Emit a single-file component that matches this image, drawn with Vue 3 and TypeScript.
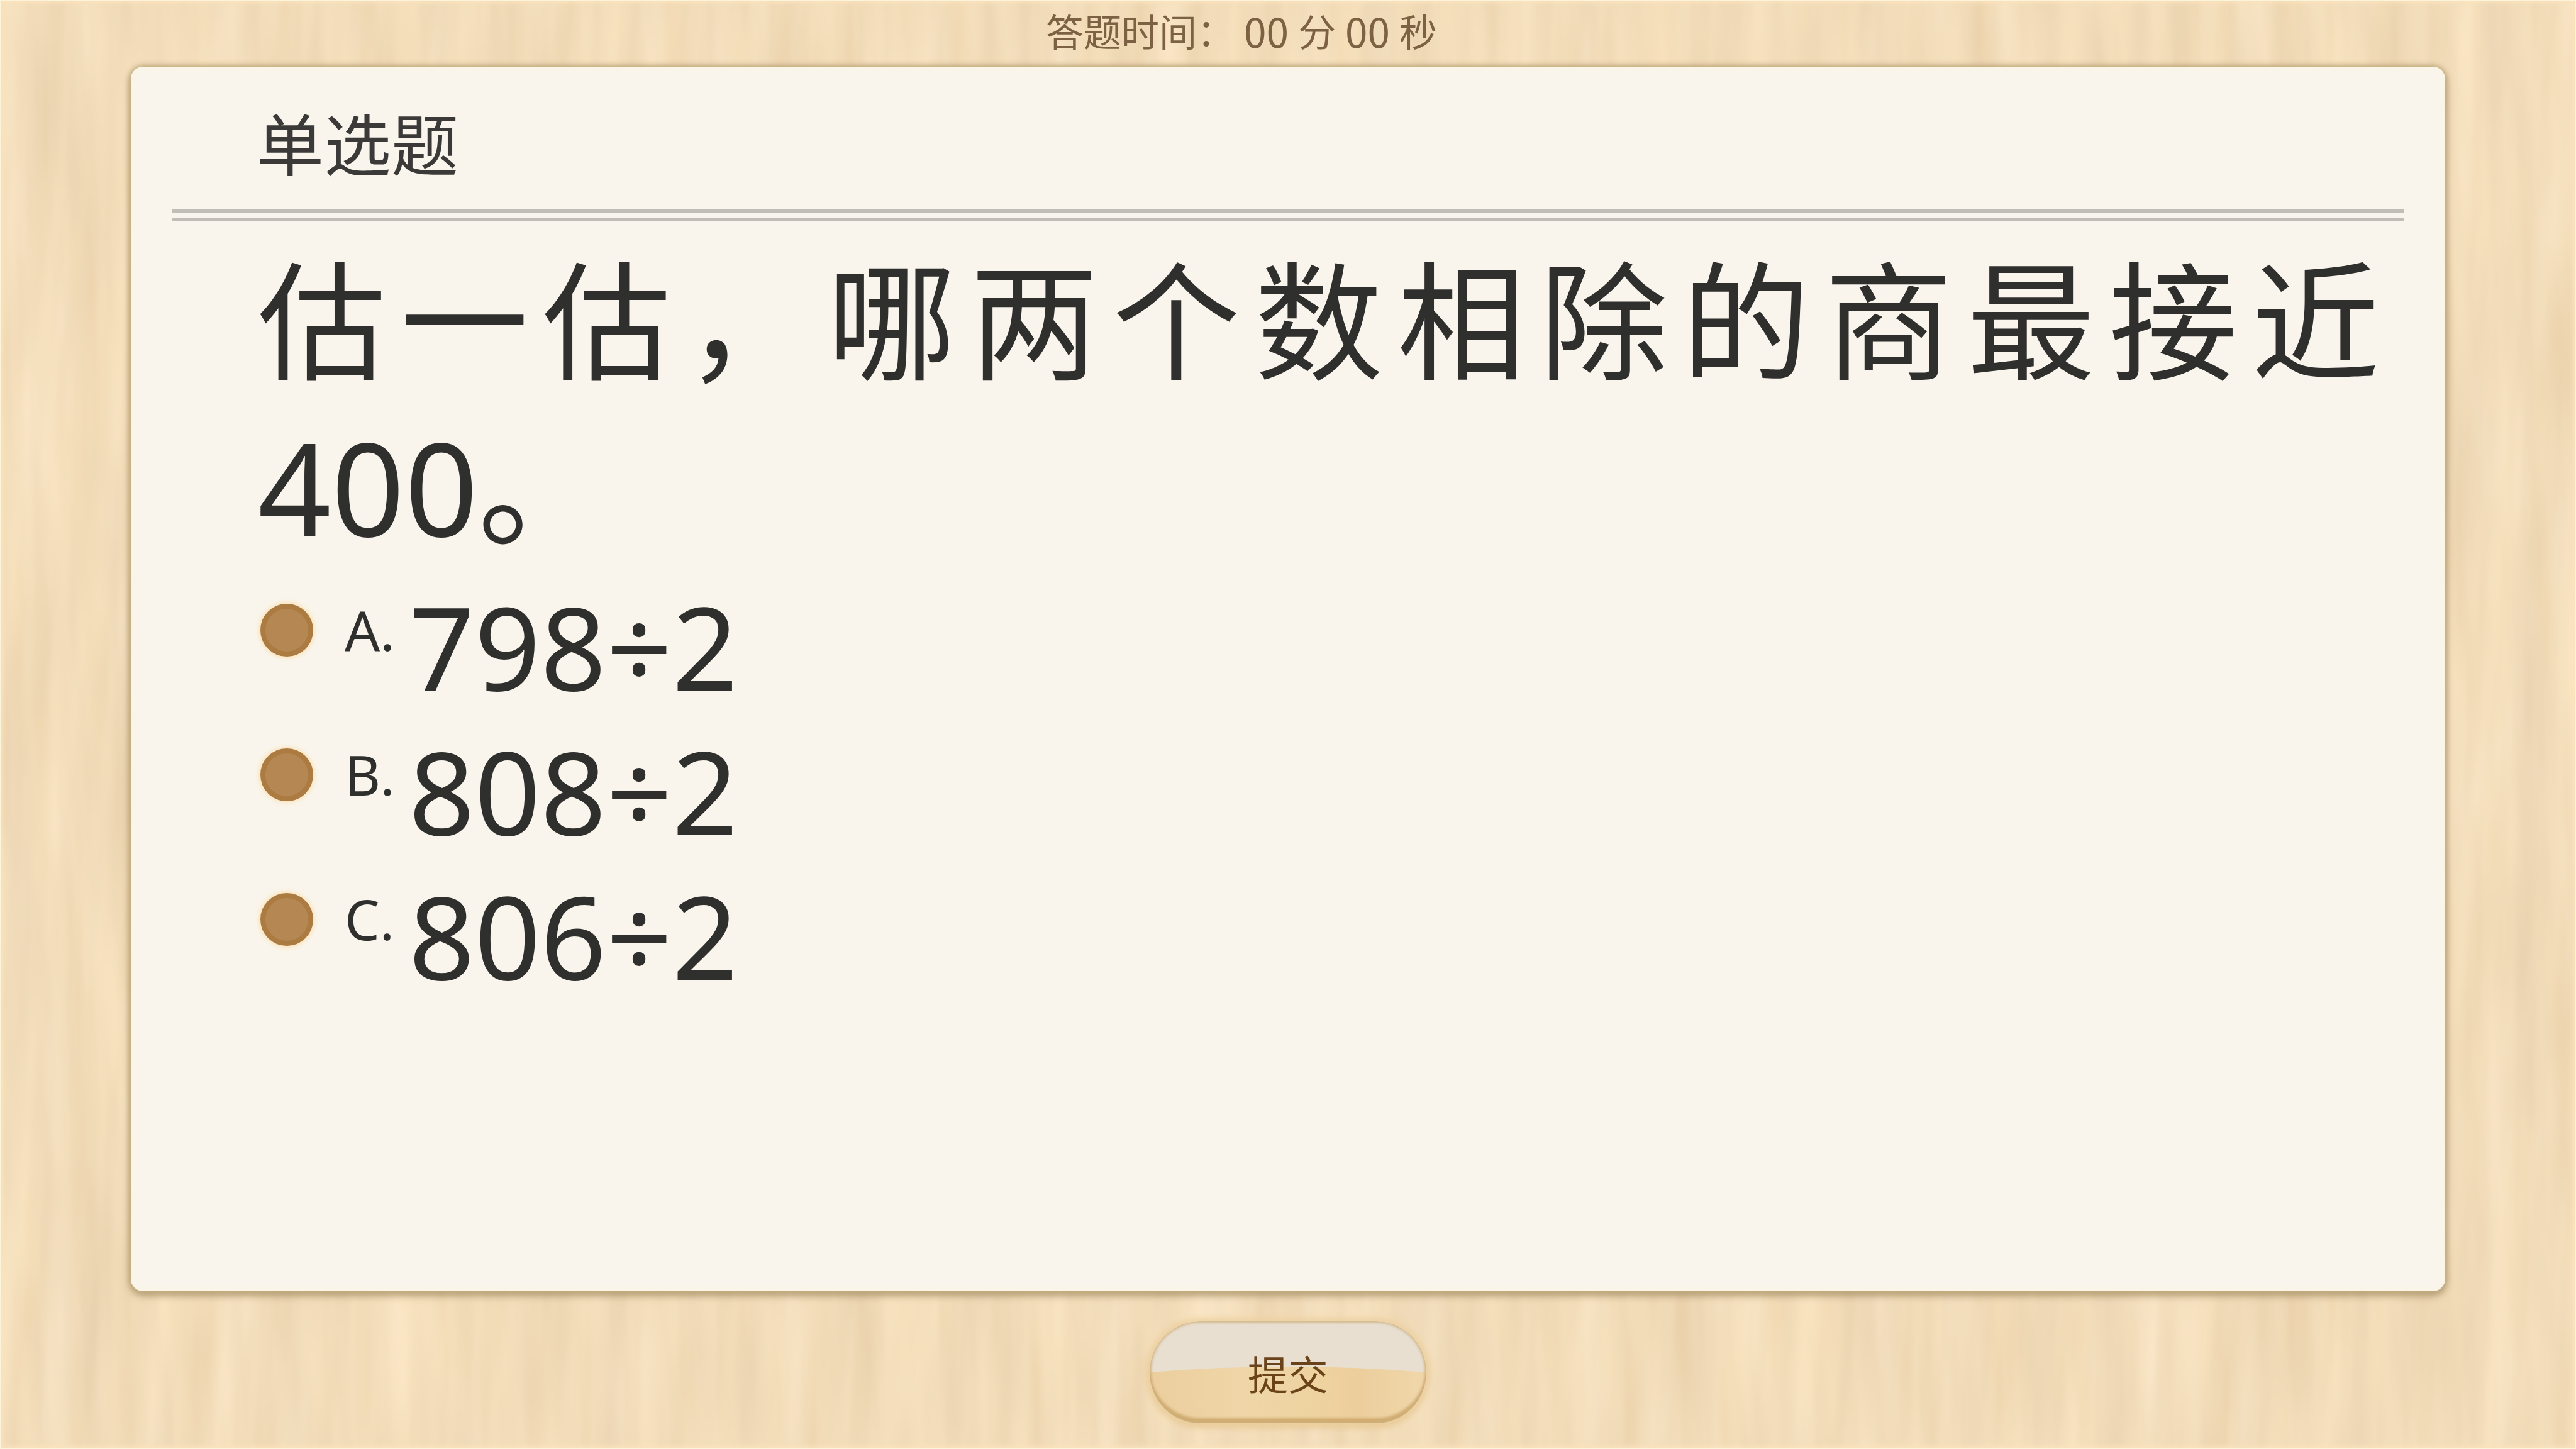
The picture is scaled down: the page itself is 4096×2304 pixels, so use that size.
<script setup lang="ts">
import { ref } from 'vue'

interface Option {
  key: string
  text: string
}

const minutes = ref('00')
const seconds = ref('00')
const picked = ref('')
const options: Option[] = [
  { key: 'A', text: '798÷2' },
  { key: 'B', text: '808÷2' },
  { key: 'C', text: '806÷2' },
]
</script>

<template>
  <div class="page" lang="zh-CN">
    <svg class="wood" aria-hidden="true">
      <defs>
        <filter id="grain" x="0" y="0" width="100%" height="100%" color-interpolation-filters="sRGB">
          <feTurbulence type="fractalNoise" baseFrequency="0.018 0.0022" numOctaves="3" seed="11" />
          <feColorMatrix
            values="0.08 0 0 0 0.908
                    0.10 0.02 0 0 0.802
                    0.11 0.05 0 0 0.645
                    0 0 0 0 1"
          />
        </filter>
      </defs>
      <rect width="100%" height="100%" filter="url(#grain)" />
    </svg>

    <header class="timer">
      <span>答题时间：</span>
      <span class="num">{{ minutes }}</span>
      <span>分</span>
      <span class="num">{{ seconds }}</span>
      <span>秒</span>
    </header>

    <main class="card">
      <h1 class="kind">单选题</h1>
      <div class="rule"></div>
      <section class="body">
        <p id="question" class="question">估一估，哪两个数相除的商最接近400。</p>
        <div class="options" role="radiogroup" aria-labelledby="question">
          <label v-for="o in options" :key="o.key" class="option">
            <input v-model="picked" class="radio" type="radio" name="answer" :value="o.key" />
            <span class="letter">{{ o.key }}.</span>
            <span class="value">{{ o.text }}</span>
          </label>
        </div>
      </section>
    </main>

    <footer class="actions">
      <button type="button" class="submit">
        <svg class="gloss" viewBox="0 0 440 160" preserveAspectRatio="none" aria-hidden="true">
          <path d="M0 0H440V80Q220 62 0 80Z" fill="#e8dfd1" />
        </svg>
        <span class="submit-text">提交</span>
      </button>
    </footer>
  </div>
</template>

<style>
body {
  margin: 0;
  background: #f2dcb8;
}
</style>

<style scoped>
.page {
  position: relative;
  box-sizing: border-box;
  min-height: 100vh;
  display: flex;
  flex-direction: column;
  font-family: "Noto Sans", "Noto Sans CJK SC", sans-serif;
  color: #2f2f2d;
}
.wood {
  position: absolute;
  inset: 0;
  width: 100%;
  height: 100%;
  z-index: -1;
}
.page::after {
  content: "";
  position: absolute;
  inset: 0;
  pointer-events: none;
  box-shadow: inset 0 0 0 2px #fbf3da, inset 0 0 8px 4px #fbe3bd;
}
.timer {
  box-sizing: border-box;
  height: 106px;
  display: flex;
  justify-content: center;
  align-items: center;
  gap: 15px;
  padding: 0 148px 10px 0;
  font-family: "Noto Sans CJK SC", sans-serif;
  font-size: 60px;
  line-height: 94px;
  color: #7c6243;
}
.num {
  font-size: 64px;
}
.card {
  flex: 1;
  margin: 0 208px;
  box-sizing: border-box;
  background: #f9f5ec;
  border-radius: 20px;
  box-shadow: inset 0 0 10px 2px #fcf5e4, 0 0 8px 2px #c0aa7c, 0 6px 12px 2px rgba(130, 108, 66, 0.5);
}
.kind {
  margin: 0;
  padding: 44px 0 22px 200px;
  font-size: 107px;
  line-height: 160px;
  font-weight: 400;
  color: #3b3a38;
}
.rule {
  height: 8px;
  margin: 0 66px;
  border-top: 6px solid #c1beb7;
  border-bottom: 6px solid #c1beb7;
}
.body {
  padding: 26px 104px 0 202px;
}
.question {
  margin: 0;
  font-size: 204px;
  line-height: 264px;
  text-align: justify;
}
.options {
  display: flex;
  flex-direction: column;
}
.option {
  display: flex;
  align-items: flex-start;
  height: 230px;
}
.radio {
  appearance: none;
  flex: none;
  width: 84px;
  height: 84px;
  margin: 54px 50px 0 4px;
  border: 8px solid #ab7b41;
  border-radius: 50%;
  background: #b58752;
  box-shadow: 0 0 6px 3px #fbe5c0;
}
.radio:checked {
  background: #6f4a20;
}
.letter {
  width: 102px;
  font-size: 88px;
  line-height: 190px;
}
.value {
  font-size: 183px;
  line-height: 242px;
}
.actions {
  height: 251px;
  display: flex;
  justify-content: center;
  align-items: flex-start;
}
.submit {
  position: relative;
  width: 440px;
  height: 162px;
  margin-top: 48px;
  padding: 0;
  border: 0;
  border-radius: 80px;
  overflow: hidden;
  background: linear-gradient(90deg, #ecce9e, #efd6a8 35%, #eed3a0 60%, #ecce9c 75%, #f0d7aa);
  font-family: "Noto Sans CJK SC", sans-serif;
  font-size: 64px;
  line-height: 154px;
  color: #6b431a;
  box-shadow: 0 0 12px 4px #eed2a2, 0 4px 12px #e0bd83;
}
.submit::after {
  content: "";
  position: absolute;
  inset: 0;
  border-radius: 80px;
  box-shadow: inset 0 0 4px 2px #cfb280, inset 0 -8px 4px #cfab6e;
}
.gloss {
  position: absolute;
  inset: 0;
  width: 100%;
  height: 100%;
}
.submit-text {
  position: relative;
}
</style>
